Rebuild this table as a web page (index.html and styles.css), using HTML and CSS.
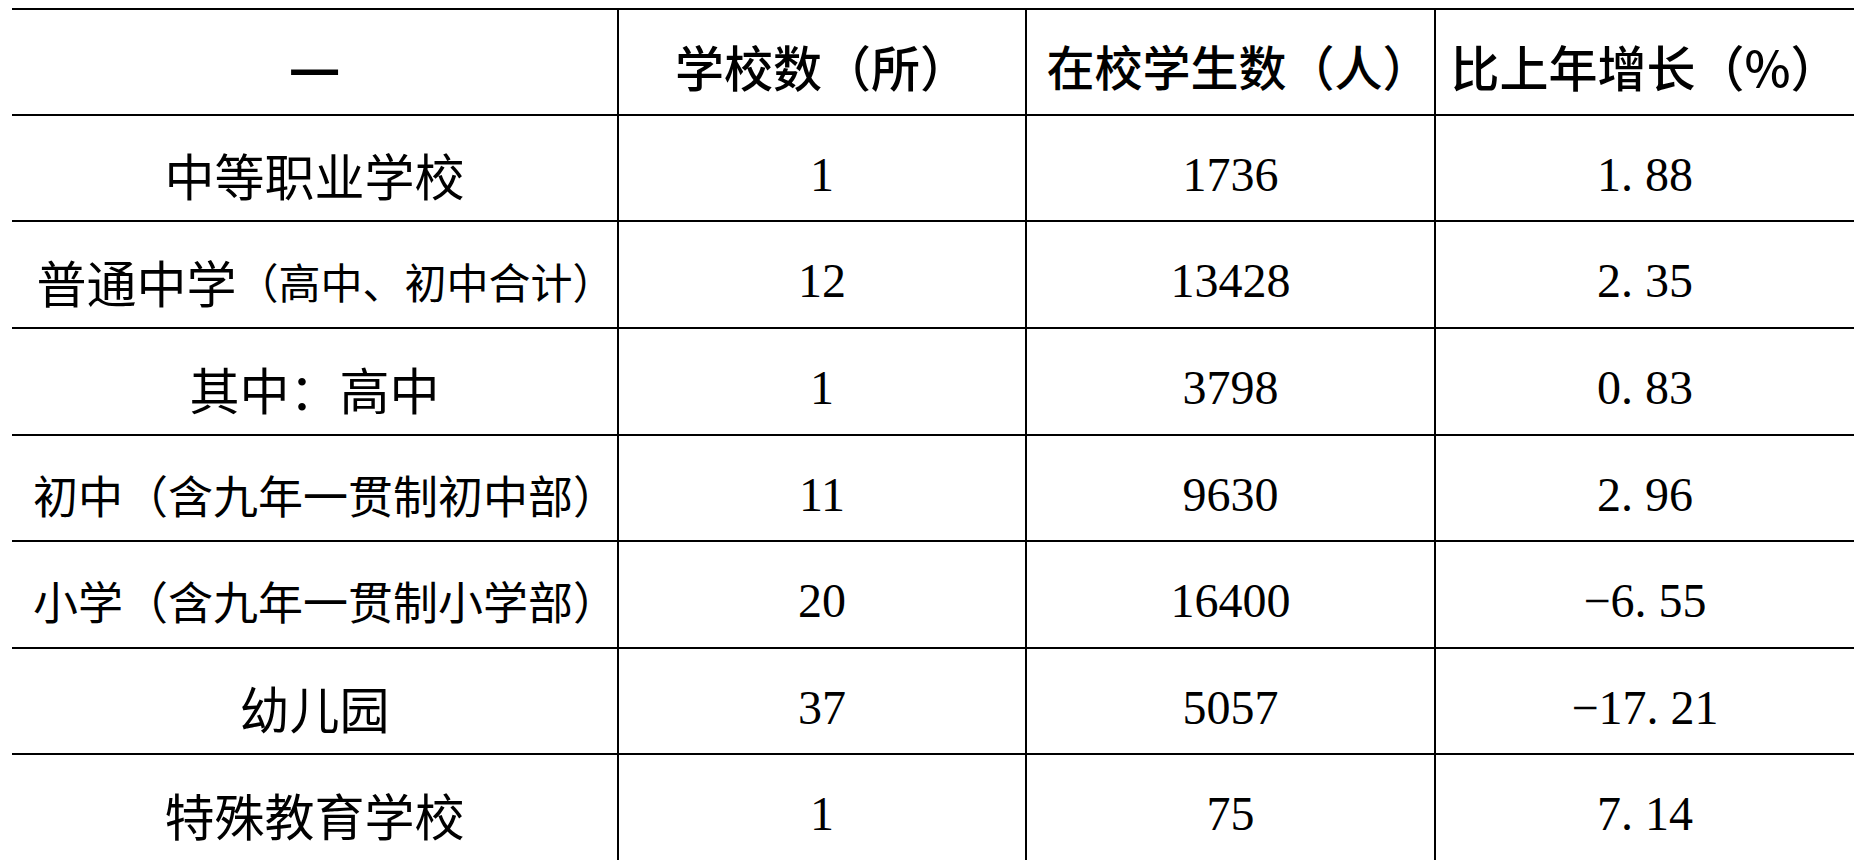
FILE: index.html
```html
<!DOCTYPE html>
<html lang="zh-CN">
<head>
<meta charset="utf-8">
<title>教育统计</title>
<link rel="stylesheet" href="styles.css">
</head>
<body>
<div class="sheet">
  <div class="row head h104">
    <div class="cell c1"><span class="dash">—</span></div>
    <div class="cell c2">学校数（所）</div>
    <div class="cell c3">在校学生数（人）</div>
    <div class="cell c4">比上年增长（%）</div>
  </div>
  <div class="row h104">
    <div class="cell c1 label">中等职业学校</div>
    <div class="cell c2 num">1</div>
    <div class="cell c3 num">1736</div>
    <div class="cell c4 num">1<span class="pt">.</span>88</div>
  </div>
  <div class="row h105">
    <div class="cell c1 label shift">普通中学<span class="small">（高中、初中合计）</span></div>
    <div class="cell c2 num">12</div>
    <div class="cell c3 num">13428</div>
    <div class="cell c4 num">2<span class="pt">.</span>35</div>
  </div>
  <div class="row h105">
    <div class="cell c1 label">其中：高中</div>
    <div class="cell c2 num">1</div>
    <div class="cell c3 num">3798</div>
    <div class="cell c4 num">0<span class="pt">.</span>83</div>
  </div>
  <div class="row h104">
    <div class="cell c1 label long shift">初中（含九年一贯制初中部）</div>
    <div class="cell c2 num">11</div>
    <div class="cell c3 num">9630</div>
    <div class="cell c4 num">2<span class="pt">.</span>96</div>
  </div>
  <div class="row h105">
    <div class="cell c1 label long shift">小学（含九年一贯制小学部）</div>
    <div class="cell c2 num">20</div>
    <div class="cell c3 num">16400</div>
    <div class="cell c4 num">−6<span class="pt">.</span>55</div>
  </div>
  <div class="row h104">
    <div class="cell c1 label">幼儿园</div>
    <div class="cell c2 num">37</div>
    <div class="cell c3 num">5057</div>
    <div class="cell c4 num">−17<span class="pt">.</span>21</div>
  </div>
  <div class="row h105">
    <div class="cell c1 label">特殊教育学校</div>
    <div class="cell c2 num">1</div>
    <div class="cell c3 num">75</div>
    <div class="cell c4 num">7<span class="pt">.</span>14</div>
  </div>
</div>
</body>
</html>
```

FILE: styles.css
```css
html, body {
  margin: 0;
  padding: 0;
  background: #ffffff;
}

body {
  padding: 8px 0 0 12px;
  font-family: "Noto Sans CJK SC", sans-serif;
  color: #000000;
  overflow: hidden;
}

.sheet {
  width: 1842px;
  border-top: 2px solid #000;
}

.row {
  display: grid;
  grid-template-columns: 605px 408px 409px 420px;
  border-bottom: 2px solid #000;
}

.h104 { height: 104px; }
.h105 { height: 105px; }

.cell {
  display: flex;
  align-items: center;
  justify-content: center;
  padding-top: 12px;
  box-sizing: border-box;
  white-space: nowrap;
  overflow: hidden;
}

.cell + .cell {
  border-left: 2px solid #000;
}

.head .cell {
  font-family: "Noto Sans CJK SC", sans-serif;
  font-weight: 500;
  font-size: 49px;
  padding-top: 6px;
}

.head .c1 {
  padding-top: 4px;
}

.head .c3 {
  font-size: 48px;
  padding-left: 16px;
}

.head .dash {
  font-weight: 700;
  font-size: 58px;
}

.label {
  font-size: 50px;
}

.label.shift {
  padding-left: 22px;
}

.label .small {
  font-size: 42px;
}

.label.long {
  font-size: 45px;
}

.num {
  font-family: "Liberation Serif", "DejaVu Serif", serif;
  font-size: 48px;
}

.pt {
  margin-right: 12px;
}
```
